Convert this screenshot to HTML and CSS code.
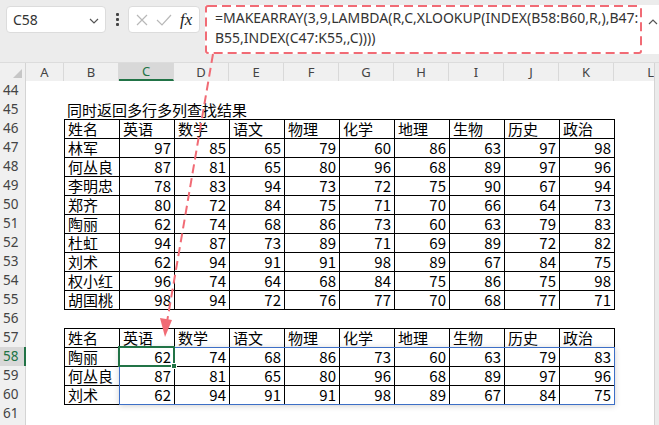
FILE: index.html
```html
<!DOCTYPE html>
<html lang="zh">
<head>
<meta charset="utf-8">
<link rel="stylesheet" href="styles.css">
</head>
<body>
<div class="app">
  <div class="toolbar">
    <div class="namebox">
      <span class="ref">C58</span>
      <svg class="chev" width="10" height="6" viewBox="0 0 10 6"><path d="M1 1 L5 5 L9 1" fill="none" stroke="#555" stroke-width="1.2"/></svg>
    </div>
    <div class="dots"><i></i><i></i><i></i></div>
    <div class="fxbox">
      <svg width="14" height="14" viewBox="0 0 14 14"><path d="M2 2 L12 12 M12 2 L2 12" stroke="#b8b8b8" stroke-width="1.2" fill="none"/></svg>
      <svg width="16" height="14" viewBox="0 0 16 14"><path d="M1 7 L6 12 L15 2" stroke="#b8b8b8" stroke-width="1.2" fill="none"/></svg>
      <span class="fx">fx</span>
    </div>
    <div class="formula">
      <div class="ftext">=MAKEARRAY(3,9,LAMBDA(R,C,XLOOKUP(INDEX(B58:B60,R,),B47:<br>B55,INDEX(C47:K55,,C))))</div>
      <svg class="caret" width="10" height="8" viewBox="0 0 10 8"><path d="M1 6 L5 2 L9 6" fill="none" stroke="#555" stroke-width="1.2"/></svg>
    </div>
  </div>

  <div class="colheads">
    <div class="corner"><span class="tri"></span></div>
    <div class="ch cw-a">A</div>
    <div class="ch">B</div>
    <div class="ch sel">C</div>
    <div class="ch">D</div>
    <div class="ch">E</div>
    <div class="ch">F</div>
    <div class="ch">G</div>
    <div class="ch">H</div>
    <div class="ch">I</div>
    <div class="ch">J</div>
    <div class="ch">K</div>
    <div class="ch cw-l">L</div>
    <div class="vs"></div>
  </div>

  <div class="sheet">
    <div class="rowheads">
      <div class="rh">44</div><div class="rh">45</div><div class="rh">46</div><div class="rh">47</div>
      <div class="rh">48</div><div class="rh">49</div><div class="rh">50</div><div class="rh">51</div>
      <div class="rh">52</div><div class="rh">53</div><div class="rh">54</div><div class="rh">55</div>
      <div class="rh">56</div><div class="rh">57</div><div class="rh sel">58</div><div class="rh">59</div>
      <div class="rh">60</div><div class="rh">61</div>
    </div>
    <div class="cells">
      <div class="blank"></div>
      <div class="title">同时返回多行多列查找结果</div>
      <div class="tbl">
        <div class="c">姓名</div><div class="c">英语</div><div class="c">数学</div><div class="c">语文</div><div class="c">物理</div><div class="c">化学</div><div class="c">地理</div><div class="c">生物</div><div class="c">历史</div><div class="c">政治</div>
        <div class="c">林军</div><div class="c n">97</div><div class="c n">85</div><div class="c n">65</div><div class="c n">79</div><div class="c n">60</div><div class="c n">86</div><div class="c n">63</div><div class="c n">97</div><div class="c n">98</div>
        <div class="c">何丛良</div><div class="c n">87</div><div class="c n">81</div><div class="c n">65</div><div class="c n">80</div><div class="c n">96</div><div class="c n">68</div><div class="c n">89</div><div class="c n">97</div><div class="c n">96</div>
        <div class="c">李明忠</div><div class="c n">78</div><div class="c n">83</div><div class="c n">94</div><div class="c n">73</div><div class="c n">72</div><div class="c n">75</div><div class="c n">90</div><div class="c n">67</div><div class="c n">94</div>
        <div class="c">郑齐</div><div class="c n">80</div><div class="c n">72</div><div class="c n">84</div><div class="c n">75</div><div class="c n">71</div><div class="c n">70</div><div class="c n">66</div><div class="c n">64</div><div class="c n">73</div>
        <div class="c">陶丽</div><div class="c n">62</div><div class="c n">74</div><div class="c n">68</div><div class="c n">86</div><div class="c n">73</div><div class="c n">60</div><div class="c n">63</div><div class="c n">79</div><div class="c n">83</div>
        <div class="c">杜虹</div><div class="c n">94</div><div class="c n">87</div><div class="c n">73</div><div class="c n">89</div><div class="c n">71</div><div class="c n">69</div><div class="c n">89</div><div class="c n">72</div><div class="c n">82</div>
        <div class="c">刘术</div><div class="c n">62</div><div class="c n">94</div><div class="c n">91</div><div class="c n">91</div><div class="c n">98</div><div class="c n">89</div><div class="c n">67</div><div class="c n">84</div><div class="c n">75</div>
        <div class="c">权小红</div><div class="c n">96</div><div class="c n">74</div><div class="c n">64</div><div class="c n">68</div><div class="c n">84</div><div class="c n">75</div><div class="c n">86</div><div class="c n">75</div><div class="c n">98</div>
        <div class="c">胡国桃</div><div class="c n">98</div><div class="c n">94</div><div class="c n">72</div><div class="c n">76</div><div class="c n">77</div><div class="c n">70</div><div class="c n">68</div><div class="c n">77</div><div class="c n">71</div>
      </div>
      <div class="gap"></div>
      <div class="tbl result">
        <div class="c">姓名</div><div class="c">英语</div><div class="c">数学</div><div class="c">语文</div><div class="c">物理</div><div class="c">化学</div><div class="c">地理</div><div class="c">生物</div><div class="c">历史</div><div class="c">政治</div>
        <div class="c">陶丽</div><div class="c n">62</div><div class="c n">74</div><div class="c n">68</div><div class="c n">86</div><div class="c n">73</div><div class="c n">60</div><div class="c n">63</div><div class="c n">79</div><div class="c n">83</div>
        <div class="c">何丛良</div><div class="c n">87</div><div class="c n">81</div><div class="c n">65</div><div class="c n">80</div><div class="c n">96</div><div class="c n">68</div><div class="c n">89</div><div class="c n">97</div><div class="c n">96</div>
        <div class="c">刘术</div><div class="c n">62</div><div class="c n">94</div><div class="c n">91</div><div class="c n">91</div><div class="c n">98</div><div class="c n">89</div><div class="c n">67</div><div class="c n">84</div><div class="c n">75</div>
        <div class="spill"></div>
        <div class="active"></div>
        <div class="handle"></div>
      </div>
    </div>
    <div class="vs"></div>
  </div>

  <svg class="annot" width="659" height="425" viewBox="0 0 659 425">
    <rect x="206" y="6" width="435" height="47" rx="2" fill="none" stroke="#f16b75" stroke-width="2" stroke-dasharray="9 5"/>
    <line x1="213" y1="54" x2="167" y2="322" stroke="#f16b75" stroke-width="2" stroke-dasharray="9 5"/>
    <polygon points="165,337 160,318 172,320" fill="#f16b75"/>
  </svg>
</div>
</body>
</html>
```

FILE: styles.css
```css
* { box-sizing: border-box; }
html, body { margin: 0; padding: 0; }
body {
  width: 659px;
  height: 425px;
  overflow: hidden;
  background: #ffffff;
  font-family: "Noto Sans CJK SC", "Noto Sans", sans-serif;
  color: #000;
}
.app { position: relative; width: 659px; height: 425px; overflow: hidden; }

/* toolbar */
.toolbar {
  height: 63px;
  background: #ececec;
  display: flex;
  align-items: flex-start;
  padding: 6px 0 0 6px;
  border-bottom: 1px solid #dcdcdc;
}
.namebox {
  width: 100px;
  height: 27px;
  background: #fff;
  border: 1px solid #dcdcdc;
  border-radius: 4px;
  display: flex;
  align-items: center;
  justify-content: space-between;
  padding: 0 6px 0 6px;
}
.ref { font-family: "Noto Sans", sans-serif; font-size: 14px; color: #333; }
.chev { margin-top: 2px; }
.dots {
  width: 22px;
  height: 27px;
  display: flex;
  flex-direction: column;
  align-items: center;
  justify-content: center;
  gap: 2px;
}
.dots i { display: block; width: 3px; height: 3px; background: #444; border-radius: 1px; }
.fxbox {
  width: 72px;
  height: 27px;
  background: #fff;
  border: 1px solid #dcdcdc;
  border-radius: 4px;
  display: flex;
  align-items: center;
  gap: 7px;
  padding-left: 6px;
}
.fx {
  font-family: "Liberation Serif", serif;
  font-style: italic;
  font-size: 17px;
  color: #222;
  margin-left: 1px;
}
.formula {
  margin-left: 5px;
  margin-top: -1px;
  flex: 1;
  height: 49px;
  background: #fff;
  display: flex;
  justify-content: space-between;
  align-items: flex-start;
  padding: 3px 0 0 10px;
}
.ftext {
  font-family: "Noto Sans", sans-serif;
  font-size: 14px;
  line-height: 20px;
  color: #333;
  white-space: nowrap;
}
.caret { margin-top: 10px; margin-right: 1px; }

/* column headers */
.colheads {
  display: flex;
  height: 18px;
  background: #f0f0f0;
}
.corner {
  width: 26px;
  position: relative;
  border-right: 1px solid #d4d4d4;
}
.tri {
  position: absolute;
  right: 3px;
  bottom: 3px;
  width: 0; height: 0;
  border-left: 9px solid transparent;
  border-bottom: 9px solid #c6c6c6;
}
.ch {
  width: 55px;
  text-align: center;
  font-family: "Noto Sans", sans-serif;
  font-size: 13px;
  line-height: 18px;
  color: #444;
  border-right: 1px solid #d9d9d9;
}
.ch.cw-a { width: 38px; }
.ch.cw-l { width: 40px; border-right: none; text-align: right; padding-right: 0; }
.ch.sel {
  background: #d8d8d8;
  color: #217346;
  border-bottom: 2px solid #217346;
  line-height: 17px;
}
.vs {
  width: 5px;
  background: #ebebeb;
  border-left: 1px solid #d4d4d4;
}

/* sheet */
.sheet { display: flex; height: 344px; }
.rowheads {
  width: 26px;
  background: #f0f0f0;
  border-right: 1px solid #d4d4d4;
}
.rh {
  height: 19px;
  font-family: "Noto Sans", sans-serif;
  font-size: 13.5px;
  line-height: 19px;
  color: #444;
  padding-left: 3px;
}
.rh.sel {
  background: #d8d8d8;
  color: #217346;
  border-right: 2px solid #217346;
  margin-right: -1px;
}
.cells {
  width: 628px;
  padding-left: 38px;
  background: #fff;
}
.blank { height: 19px; }
.gap { height: 18px; }
.title {
  height: 19px;
  font-size: 15px;
  line-height: 19px;
  padding-left: 3px;
  white-space: nowrap;
}
.tbl {
  display: grid;
  grid-template-columns: repeat(10, 55px);
  grid-auto-rows: 19px;
  width: 551px;
  border-right: 1px solid #000;
  border-bottom: 1px solid #000;
  position: relative;
}
.c {
  border-left: 1px solid #000;
  border-top: 1px solid #000;
  font-size: 15px;
  line-height: 18px;
  padding: 0 0 0 3px;
  white-space: nowrap;
  overflow: hidden;
}
.c.n { text-align: right; padding: 0 3px 0 0; }

.spill {
  position: absolute;
  left: 55px;
  top: 19px;
  width: 496px;
  height: 58px;
  border: 1px solid #3d6fc6;
  box-shadow: 0 1px 6px rgba(0,0,0,0.18);
}
.active {
  position: absolute;
  left: 54px;
  top: 18px;
  width: 57px;
  height: 21px;
  border: 2px solid #217346;
}
.handle {
  position: absolute;
  left: 107px;
  top: 35px;
  width: 6px;
  height: 6px;
  background: #217346;
  border: 1px solid #fff;
}

.annot { position: absolute; left: 0; top: 0; pointer-events: none; }
```
